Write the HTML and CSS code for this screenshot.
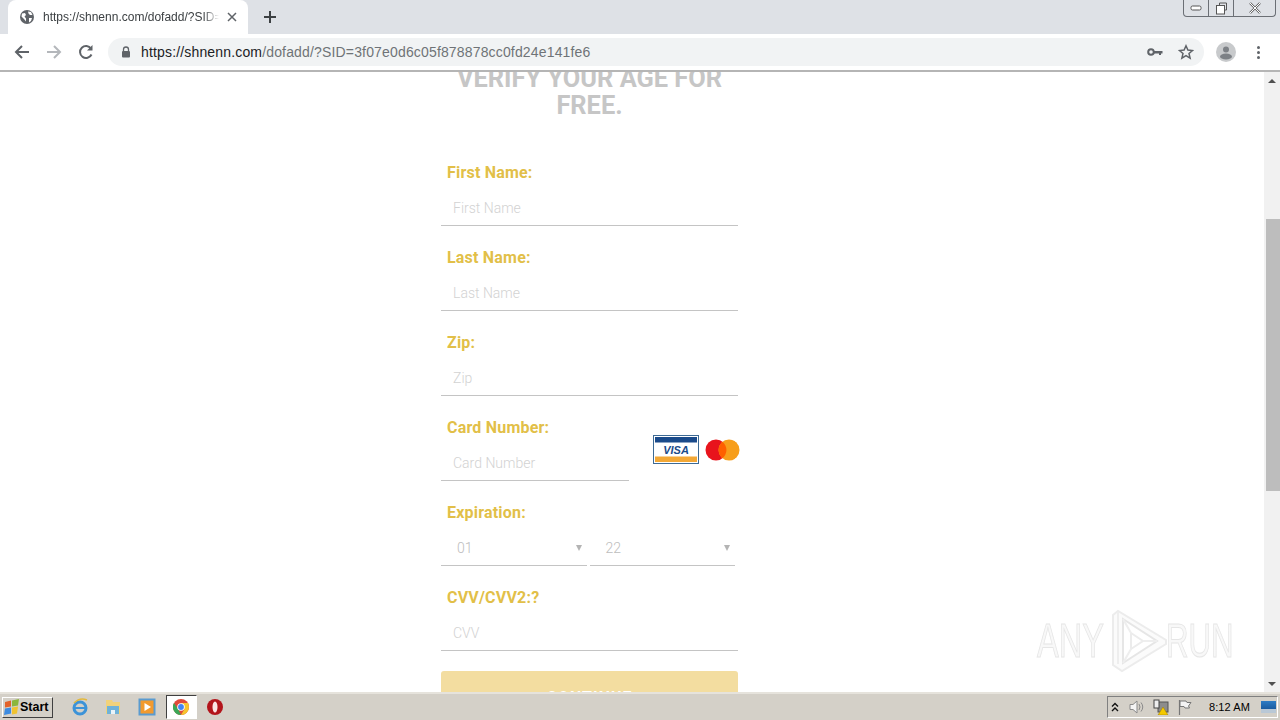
FILE: index.html
```html
<!DOCTYPE html>
<html lang="en">
<head>
    <meta charset="UTF-8">
    <title>https://shnenn.com/dofadd/?SID=3f07e0d6c05f878878cc0fd24e141fe6</title>
    <link rel="stylesheet" href="styles.css">
</head>
<body>

    <!-- Browser tabs -->
    <div class="tabstrip">
        <div class="tab">
            <svg class="favicon" width="16" height="16" viewBox="0 0 16 16">
                <circle cx="8" cy="8" r="7" fill="#5f6368"/>
                <path d="M3 4.500 6 4l1 2-1.500 1.500 1.500 2v3L5 10 2.500 7.500zM9 2.500l3 .5 1.500 3H11L9.500 4.500zM10 9h3l-1 3-2 1.500z" fill="#fff"/>
            </svg>
            <span class="tab-title">https://shnenn.com/dofadd/?SID=3f07e0d6c05f</span>
            <svg class="tab-close" width="10" height="10" viewBox="0 0 10 10">
                <path d="M1 1l8 8M9 1l-8 8" stroke="#5f6368" stroke-width="1.500"/>
            </svg>
        </div>
        <svg class="new-tab" width="12" height="12" viewBox="0 0 12 12">
            <path d="M6 0v12M0 6h12" stroke="#3c4043" stroke-width="2"/>
        </svg>
        <div class="window-buttons">
            <div class="win-btn">
                <svg width="12" height="8" viewBox="0 0 12 8"><rect x="1" y="2" width="10" height="4" rx="1.500" fill="#fff" stroke="#555"/></svg>
            </div>
            <div class="win-btn">
                <svg width="13" height="13" viewBox="0 0 13 13"><path d="M4.500 3V1h7v7H9.500" fill="none" stroke="#555"/><rect x="1.500" y="3.500" width="8" height="8.500" fill="#fff" stroke="#555"/></svg>
            </div>
            <div class="win-btn win-close">
                <svg width="14" height="12" viewBox="0 0 14 12"><path d="M2 1l10 10M12 1L2 11" stroke="#666" stroke-width="2.400"/><path d="M2 1l10 10M12 1L2 11" stroke="#fff" stroke-width="1"/></svg>
            </div>
        </div>
    </div>

    <!-- Toolbar -->
    <div class="toolbar">
        <svg class="nav-icon" width="16" height="16" viewBox="0 0 16 16">
            <path d="M15 8H2.500M8 2 2 8l6 6" fill="none" stroke="#5f6368" stroke-width="2"/>
        </svg>
        <svg class="nav-icon" width="16" height="16" viewBox="0 0 16 16">
            <path d="M1 8h12.500M8 2l6 6-6 6" fill="none" stroke="#b4b7bb" stroke-width="2"/>
        </svg>
        <svg class="nav-icon" width="16" height="16" viewBox="0 0 16 16">
            <path d="M13.500 10.500A6 6 0 1 1 13 4.600" fill="none" stroke="#5f6368" stroke-width="2"/>
            <path d="M14.500 1v5.500H9z" fill="#5f6368"/>
        </svg>
        <div class="omnibox">
            <svg class="lock" width="10" height="12" viewBox="0 0 10 12">
                <path d="M2.500 5V3.500a2.500 2.500 0 0 1 5 0V5" fill="none" stroke="#5f6368" stroke-width="1.300"/>
                <rect x="1" y="5" width="8" height="6.500" rx="1" fill="#5f6368"/>
            </svg>
            <span class="url"><span class="url-host">https://shnenn.com</span>/dofadd/?SID=3f07e0d6c05f878878cc0fd24e141fe6</span>
            <svg class="key" width="16" height="10" viewBox="0 0 16 10">
                <circle cx="4" cy="5" r="2.800" fill="none" stroke="#5f6368" stroke-width="2"/>
                <path d="M7 4h8.500v2.500H14V8h-2V6.500H7z" fill="#5f6368"/>
            </svg>
            <svg class="star" width="16" height="16" viewBox="0 0 16 16">
                <path d="M8 1.800l1.900 4.300 4.600.4-3.500 3 1.100 4.600L8 11.700l-4.100 2.400L5 9.500l-3.500-3 4.600-.4z" fill="none" stroke="#5f6368" stroke-width="1.500"/>
            </svg>
        </div>
        <div class="avatar">
            <svg width="20" height="20" viewBox="0 0 20 20">
                <circle cx="10" cy="10" r="10" fill="#c8cacc"/>
                <circle cx="10" cy="7.500" r="3" fill="#7d8186"/>
                <ellipse cx="10" cy="14.500" rx="6" ry="3" fill="#7d8186"/>
            </svg>
        </div>
        <div class="menu-dots"><i></i><i></i><i></i></div>
    </div>

    <!-- Page -->
    <div class="viewport">
        <div class="page">
            <form class="age-form">
                <h2>VERIFY YOUR AGE FOR FREE.</h2>

                <div class="field">
                    <label>First Name:</label>
                    <input type="text" placeholder="First Name">
                </div>
                <div class="field">
                    <label>Last Name:</label>
                    <input type="text" placeholder="Last Name">
                </div>
                <div class="field">
                    <label>Zip:</label>
                    <input type="text" placeholder="Zip">
                </div>
                <div class="field card-field">
                    <div class="card-input">
                        <label>Card Number:</label>
                        <input type="text" placeholder="Card Number">
                    </div>
                    <div class="card-logos">
                        <svg width="46" height="29" viewBox="0 0 46 29">
                            <rect x=".5" y=".5" width="45" height="28" fill="#fff" stroke="#3d6a94"/>
                            <rect x="2" y="2" width="42" height="5.500" fill="#1a4a8a"/>
                            <rect x="2" y="21.500" width="42" height="5.500" fill="#f3a836"/>
                            <text x="23" y="19" class="visa-text" text-anchor="middle">VISA</text>
                        </svg>
                        <svg width="35" height="22" viewBox="0 0 35 22">
                            <circle cx="11" cy="11" r="10.500" fill="#e8141c"/>
                            <circle cx="24" cy="11" r="10.500" fill="#f79e1b"/>
                            <path d="M17.500 2.800a10.500 10.500 0 0 1 0 16.400 10.500 10.500 0 0 1 0-16.400z" fill="#ff5f00"/>
                        </svg>
                    </div>
                </div>
                <div class="field">
                    <label>Expiration:</label>
                    <div class="expiry">
                        <div class="fake-select">01<span class="arrow"></span></div>
                        <div class="fake-select">22<span class="arrow"></span></div>
                    </div>
                </div>
                <div class="field">
                    <label>CVV/CVV2:?</label>
                    <input type="text" placeholder="CVV">
                </div>
                <button type="button" class="continue">CONTINUE</button>
            </form>
        </div>

        <div class="scrollbar">
            <div class="scroll-btn"><span class="up"></span></div>
            <div class="scroll-track"><div class="scroll-thumb"></div></div>
            <div class="scroll-btn"><span class="down"></span></div>
        </div>

        <!-- Watermark -->
        <div class="watermark">
            <span class="wm-text">ANY</span>
            <svg class="wm-logo" width="58" height="64" viewBox="0 0 58 64">
                <path d="M3 6 8 2 56 31v4L12 62 3 56z" fill="#fbfbfb" stroke="#ececec" stroke-width="2"/>
                <path d="M13 10 47 32 13 54z" fill="#fff" stroke="#e6e6e6" stroke-width="2"/>
                <path d="M21 24 33 32 21 40z" fill="#fff" stroke="#ececec" stroke-width="2"/>
                <path d="M8 3v52M13 10l8 14M47 32H33M13 54l8-14" fill="none" stroke="#eeeeee" stroke-width="2"/>
            </svg>
            <span class="wm-text wm-run">RUN</span>
        </div>
    </div>

    <!-- Taskbar -->
    <div class="taskbar">
        <div class="start">
            <svg width="16" height="16" viewBox="0 0 16 16">
                <path d="M1 3l6-1.500v6L1 8.500z" fill="#e2622a"/>
                <path d="M8 1.500 15 0l-1 6.500-6 1z" fill="#8bb63c"/>
                <path d="M1 9.500l6-1v6L0 16z" fill="#3d8be0"/>
                <path d="M8 8.500l6-1-1 7-5 1z" fill="#f0c330"/>
            </svg>
            <b>Start</b>
        </div>
        <div class="quick-launch">
            <div class="task-icon">
                <svg width="18" height="18" viewBox="0 0 18 18">
                    <circle cx="9" cy="10" r="6" fill="none" stroke="#3c93d8" stroke-width="3"/>
                    <path d="M4 10h11" stroke="#3c93d8" stroke-width="2"/>
                    <path d="M3 5q6-6 13-3" fill="none" stroke="#e4b93c" stroke-width="1.500"/>
                </svg>
            </div>
            <div class="task-icon">
                <svg width="18" height="18" viewBox="0 0 18 18">
                    <path d="M2 2h6l1 2h7v12H2z" fill="#f1d27a"/>
                    <rect x="3" y="8" width="12" height="8" fill="#6fb2d8"/>
                    <rect x="7" y="12" width="4" height="4" fill="#e9f3f8"/>
                </svg>
            </div>
            <div class="task-icon">
                <svg width="18" height="18" viewBox="0 0 18 18">
                    <rect x="1.500" y="1.500" width="15" height="15" fill="#f29a2e" stroke="#5a9bd0" stroke-width="2"/>
                    <path d="M6.500 5v8l6.500-4z" fill="#fff"/>
                </svg>
            </div>
            <div class="task-icon task-active">
                <svg width="16" height="16" viewBox="0 0 16 16">
                    <circle cx="8" cy="8" r="8" fill="#e04a3a"/>
                    <path d="M8 16a8 8 0 0 1-7-12l4 6z" fill="#3aa757"/>
                    <path d="M16 8a8 8 0 0 1-8 8l3.500-6L8 4h7.300z" fill="#f6c52e"/>
                    <circle cx="8" cy="8" r="3.800" fill="#fff"/>
                    <circle cx="8" cy="8" r="2.900" fill="#4285f4"/>
                </svg>
            </div>
            <div class="task-icon">
                <svg width="16" height="16" viewBox="0 0 16 16">
                    <circle cx="8" cy="8" r="8" fill="#b3141b"/>
                    <ellipse cx="8" cy="8" rx="2.500" ry="5.500" fill="#fbe3e3"/>
                </svg>
            </div>
        </div>
        <div class="tray">
            <svg width="8" height="10" viewBox="0 0 8 10"><path d="M1 4.500l3-3 3 3M1 9l3-3 3 3" fill="none" stroke="#111" stroke-width="1.400"/></svg>
            <svg class="tray-speaker" width="16" height="16" viewBox="0 0 16 16">
                <path d="M1 5.500h3l4-3.500v12l-4-3.500H1z" fill="#f4f4f4" stroke="#8a8a8a"/>
                <path d="M10 5q2 3 0 6M12 3.500q3.500 4.500 0 9" fill="none" stroke="#8a8a8a"/>
            </svg>
            <svg width="16" height="16" viewBox="0 0 16 16">
                <rect x="5" y="3" width="10" height="10" fill="#8c8c8c" stroke="#555"/>
                <rect x="1" y="1" width="5" height="8" fill="#eee" stroke="#444"/>
                <path d="M10 8l5 8H5z" fill="#f4c900" stroke="#9c7a00" stroke-width=".5"/>
            </svg>
            <svg width="16" height="16" viewBox="0 0 16 16">
                <path d="M2.500 1v15" stroke="#777" stroke-width="1.200"/>
                <path d="M3 2h6l1 1.500h4l-2.500 3.500 1 2H8L7 7.500H3z" fill="#f4f4f4" stroke="#777"/>
            </svg>
            <span class="clock">8:12 AM</span>
            <div class="show-desktop"></div>
        </div>
    </div>

</body>
</html>
```

FILE: styles.css
```css
* {
    margin: 0;
    padding: 0;
    box-sizing: border-box;
}

html, body {
    height: 720px;
    overflow: hidden;
}

body {
    display: flex;
    flex-direction: column;
    background: white;
    font-family: 'Roboto', sans-serif;
}

/* tabs */
.tabstrip {
    height: 34px;
    background: #dee1e6;
    display: flex;
    align-items: flex-end;
    padding-left: 8px;
    flex-shrink: 0;
}

.tab {
    width: 240px;
    height: 34px;
    background: white;
    border-radius: 8px 8px 0 0;
    display: flex;
    align-items: center;
    padding-left: 11px;
}

.favicon {
    flex-shrink: 0;
}

.tab-title {
    width: 176px;
    margin-left: 8px;
    font-family: 'Liberation Sans', sans-serif;
    font-size: 12px;
    color: #3c4043;
    white-space: nowrap;
    overflow: hidden;
    -webkit-mask-image: linear-gradient(to right, black 160px, transparent 176px);
    mask-image: linear-gradient(to right, black 160px, transparent 176px);
}

.tab-close {
    margin-left: 8px;
}

.new-tab {
    margin: 0 0 11px 16px;
}

.window-buttons {
    align-self: flex-start;
    margin-left: auto;
    margin-right: 4px;
    width: 93px;
    height: 17px;
    display: flex;
    border: 1px solid #6b6f75;
    border-top: none;
    border-radius: 0 0 4px 4px;
    background: #dee1e6;
}

.win-btn {
    flex: 1;
    display: flex;
    align-items: center;
    justify-content: center;
    border-right: 1px solid #6b6f75;
}

.win-btn:first-child {
    flex: 0 0 25px;
}

.win-btn:nth-child(2) {
    flex: 0 0 25px;
}

.win-close {
    border-right: none;
}

/* toolbar */
.toolbar {
    height: 38px;
    background: white;
    border-bottom: 2px solid #b5b5b5;
    display: flex;
    align-items: center;
    padding-left: 14px;
    flex-shrink: 0;
}

.nav-icon {
    margin-right: 16px;
}

.omnibox {
    width: 1096px;
    height: 28px;
    margin-left: -2px;
    border-radius: 14px;
    background: #f1f3f4;
    display: flex;
    align-items: center;
    padding-left: 13px;
}

.url {
    margin-left: 10px;
    font-family: 'Liberation Sans', sans-serif;
    font-size: 14px;
    letter-spacing: .16px;
    color: #6f7377;
    white-space: nowrap;
}

.url-host {
    color: #202124;
}

.key {
    margin-left: auto;
}

.star {
    margin: 0 10px 0 15px;
}

.avatar {
    display: flex;
    margin-left: 12px;
}

.menu-dots {
    margin-left: 21px;
    display: flex;
    flex-direction: column;
    gap: 2px;
}

.menu-dots i {
    width: 3px;
    height: 3px;
    background: #5f6368;
    border-radius: 50%;
}

/* page area */
.viewport {
    position: relative;
    height: 620px;
    display: flex;
    overflow: hidden;
    flex-shrink: 0;
}

.page {
    flex: 1;
    overflow: hidden;
    padding-left: 441px;
}

.age-form {
    width: 297px;
}

h2 {
    margin-top: -7px;
    margin-bottom: 32px;
    text-align: center;
    font-size: 25.4px;
    line-height: 27px;
    font-weight: 700;
    color: #c6c6c6;
}

.field {
    height: 85px;
}

.field label {
    display: block;
    height: 40px;
    padding: 12px 0 0 6px;
    font-size: 16px;
    line-height: 20px;
    letter-spacing: .2px;
    font-weight: 700;
    color: #e2bf48;
}

.field input {
    display: block;
    width: 100%;
    height: 35px;
    border: none;
    border-bottom: 1px solid #c4c4c4;
    outline: none;
    padding: 0 12px;
    font-family: 'Roboto', sans-serif;
    font-size: 14px;
    font-weight: 300;
    background: transparent;
}

.field input::placeholder {
    color: #d2d2d2;
    opacity: 1;
}

.card-field {
    display: flex;
}

.card-input {
    width: 188px;
    flex-shrink: 0;
}

.card-logos {
    display: flex;
    align-items: center;
    gap: 6px;
    margin: 19px 0 0 24px;
    height: 49px;
    flex-shrink: 0;
}

.card-logos svg {
    flex-shrink: 0;
}

.visa-text {
    font-family: 'Liberation Sans', sans-serif;
    font-size: 11px;
    font-weight: 700;
    font-style: italic;
    fill: #1a4a8a;
}

.expiry {
    display: flex;
    gap: 3px;
    width: 294px;
}

.fake-select {
    flex: 1;
    height: 35px;
    border-bottom: 1px solid #c4c4c4;
    display: flex;
    align-items: center;
    justify-content: space-between;
    padding: 0 5px 0 16px;
    font-size: 14px;
    font-weight: 300;
    color: #bdbdbd;
}

.arrow {
    width: 0;
    height: 0;
    border-left: 3.500px solid transparent;
    border-right: 3.500px solid transparent;
    border-top: 6px solid #b4b4b4;
}

.continue {
    display: block;
    width: 100%;
    height: 48px;
    margin-top: 10px;
    border: none;
    border-radius: 3px;
    background: #f3dda0;
    color: white;
    font-family: 'Roboto', sans-serif;
    font-size: 16px;
    font-weight: 700;
    letter-spacing: 1px;
    padding-top: 4px;
}

/* scrollbar */
.scrollbar {
    width: 16px;
    flex-shrink: 0;
    display: flex;
    flex-direction: column;
    background: #f1f1f1;
}

.scroll-btn {
    height: 17px;
    display: flex;
    align-items: center;
    justify-content: center;
}

.scroll-btn span {
    width: 0;
    height: 0;
    border-left: 4px solid transparent;
    border-right: 4px solid transparent;
}

.up {
    border-bottom: 4px solid #505050;
}

.down {
    border-top: 4px solid #505050;
}

.scroll-track {
    flex: 1;
    padding-top: 130px;
}

.scroll-thumb {
    height: 272px;
    margin-left: 2px;
    background: #bdbdbd;
}

.watermark {
    position: absolute;
    left: 1037px;
    top: 537px;
    display: flex;
    align-items: center;
}

.wm-logo {
    margin: 0 0 0 8px;
    flex-shrink: 0;
}

.wm-text {
    width: 65px;
    font-family: 'Liberation Sans', sans-serif;
    font-size: 48px;
    line-height: 64px;
    font-weight: 400;
    color: #f8f8f8;
    white-space: nowrap;
    -webkit-text-stroke: 1px #e6e6e6;
    transform: scaleX(.68);
    transform-origin: left center;
}

.wm-run {
    margin-left: -2px;
    transform: scaleX(.65);
}

/* taskbar */
.taskbar {
    height: 28px;
    background: #d4d0c8;
    border-top: 2px solid #e6e3dc;
    display: flex;
    align-items: center;
    flex-shrink: 0;
}

.start {
    width: 51px;
    height: 21px;
    margin-left: 2px;
    display: flex;
    align-items: center;
    padding-left: 1px;
    background: #d4d0c8;
    border: 1px solid;
    border-color: #fff #404040 #404040 #fff;
    font-family: 'Liberation Sans', sans-serif;
    font-size: 12.5px;
    color: black;
}

.quick-launch {
    display: flex;
    align-items: center;
    margin-left: 10px;
}

.task-icon {
    width: 33.500px;
    height: 24px;
    display: flex;
    align-items: center;
    justify-content: center;
}

.task-active {
    width: 31px;
    background: white;
    border: 1px solid;
    border-color: #404040 #fff #fff #404040;
    margin: 0 2px;
}

.tray {
    margin-left: auto;
    margin-right: 2px;
    width: 171px;
    height: 22px;
    display: flex;
    align-items: center;
    gap: 8px;
    padding-left: 3px;
    border: 1px solid;
    border-color: #808080 #fff #fff #808080;
}

.tray-speaker {
    margin-left: 2px;
}

.clock {
    margin-left: 8px;
    font-family: 'Liberation Sans', sans-serif;
    font-size: 11px;
    letter-spacing: .1px;
    color: black;
    white-space: nowrap;
}

.show-desktop {
    width: 15px;
    height: 12px;
    background: linear-gradient(#2e7cc4, #1a5a9e 70%, #b9c8d6 70%);
    margin-left: 3px;
}
```
